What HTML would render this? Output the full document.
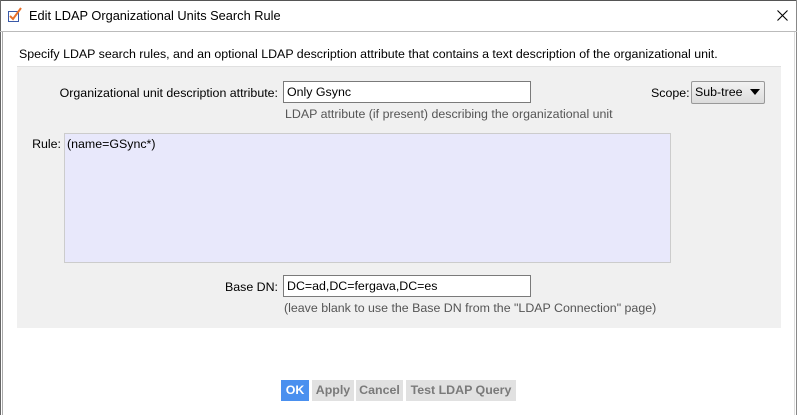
<!DOCTYPE html>
<html><head><style>
*{margin:0;padding:0;box-sizing:border-box}
body{width:797px;height:415px;background:#fff;font-family:"Liberation Sans",sans-serif;font-size:12.4px;color:#000;position:relative;overflow:hidden}
.a{position:absolute;white-space:nowrap}
.inp{position:absolute;background:#fff;border:1px solid #7a7a7a;padding:3px 3px;font-size:12.4px;line-height:14px}
.hint{color:#555}
.btn{position:absolute;top:380px;height:21px;background:#e1e1e1;color:#7a7a7a;font-weight:bold;font-size:12.4px;line-height:21px;text-align:center}
</style></head><body>
<div class="a" style="left:0;top:0;width:797px;height:1px;background:#555"></div>
<div class="a" style="left:0;top:0;width:1px;height:415px;background:#666"></div>
<div class="a" style="left:796px;top:0;width:1px;height:415px;background:#888"></div>
<svg class="a" style="left:7px;top:7px" width="16" height="16" viewBox="0 0 16 16"><rect x="1.5" y="4.5" width="10" height="10" fill="#fff" stroke="#3a5aa8"/><path d="M3 9 L6 12 L14 1" fill="none" stroke="#e8702a" stroke-width="2"/></svg>
<div class="a" style="left:29px;top:8px;font-size:12.8px">Edit LDAP Organizational Units Search Rule</div>
<svg class="a" style="left:777px;top:10px" width="11" height="11" viewBox="0 0 11 11"><path d="M0.5 0.5L10.5 10.5M10.5 0.5L0.5 10.5" stroke="#000" stroke-width="1.1"/></svg>
<div class="a" style="left:0;top:31px;width:797px;height:1px;background:#bbb"></div>
<div class="a" style="left:2px;top:32px;width:1px;height:383px;background:#aaa"></div>
<div class="a" style="left:794px;top:32px;width:1px;height:383px;background:#ddd"></div>
<div class="a" style="left:19px;top:47px">Specify LDAP search rules, and an optional LDAP description attribute that contains a text description of the organizational unit.</div>
<div class="a" style="left:17px;top:66px;width:764px;height:262px;background:#f0f0f0;border-top:1px solid #e0e0e0"></div>
<div class="a" style="right:519px;top:86px">Organizational unit description attribute:</div>
<div class="inp" style="left:283px;top:81px;width:248px;height:22px">Only Gsync</div>
<div class="a hint" style="left:285px;top:107px">LDAP attribute (if present) describing the organizational unit</div>
<div class="a" style="left:651px;top:86px">Scope:</div>
<div class="a" style="left:691px;top:81px;width:74px;height:23px;border:1px solid #999;border-radius:2px;background:linear-gradient(#f2f2f2,#dcdcdc);padding:3px 3px;line-height:15px">Sub-tree</div>
<div class="a" style="left:750px;top:89px;width:0;height:0;border-left:5px solid transparent;border-right:5px solid transparent;border-top:6px solid #000"></div>
<div class="a" style="right:736px;top:137px">Rule:</div>
<div class="a" style="left:64px;top:133px;width:607px;height:130px;background:#e8e8fb;border:1px solid #ccc;padding:3px 2px">(name=GSync*)</div>
<div class="a" style="right:519px;top:280px">Base DN:</div>
<div class="inp" style="left:283px;top:275px;width:248px;height:22px">DC=ad,DC=fergava,DC=es</div>
<div class="a hint" style="left:284px;top:301px">(leave blank to use the Base DN from the "LDAP Connection" page)</div>
<div class="btn" style="left:281px;width:28px;background:#4a90ef;color:#fff">OK</div>
<div class="btn" style="left:312px;width:42px">Apply</div>
<div class="btn" style="left:356px;width:47px">Cancel</div>
<div class="btn" style="left:406px;width:110px">Test LDAP Query</div>
</body></html>
